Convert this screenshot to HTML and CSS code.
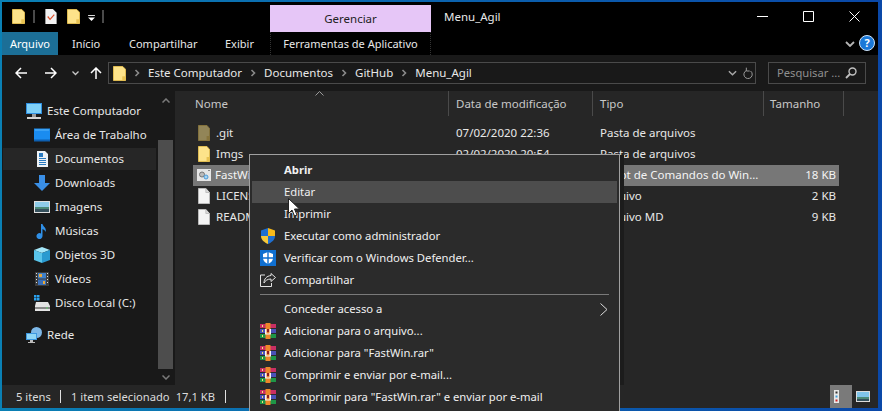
FILE: index.html
```html
<!DOCTYPE html>
<html lang="pt-BR">
<head>
  <meta charset="UTF-8">
  <title>Menu_Agil</title>
  <link rel="stylesheet" href="styles.css">
</head>
<body>
  <svg class="defs" width="0" height="0">
    <symbol id="folder" viewBox="0 0 14 16" preserveAspectRatio="none">
      <path d="M.5.5h10l3 3v12H.5z" fill="#fde38a" stroke="#e8c252"/>
      <path d="M10 11h3.5v4.5H10z" fill="#e8c252"/>
    </symbol>
    <symbol id="page" viewBox="0 0 13 16" preserveAspectRatio="none">
      <path d="M.5.5h8l4 4v11H.5z" fill="#f4f4f4" stroke="#bdbdbd"/>
      <path d="M8.5.5v4h4" fill="#dcdcdc" stroke="#bdbdbd"/>
    </symbol>
    <symbol id="rar" viewBox="0 0 16 16">
      <path d="M0 1h16v4H0z" fill="#c92f62"/>
      <path d="M0 6h16v4H0z" fill="#4a52b8"/>
      <path d="M0 11h16v4H0z" fill="#1e9646"/>
      <path d="M2 2h1v2H2zM2 7h1v2H2zM2 12h1v2H2z" fill="#f6e27a"/>
      <path d="M5.500 0h5v16h-5z" fill="#ee872a"/>
      <path d="M5 6h1.500v4.500h3V6H11v5.500H5z" fill="#f6f6f6"/>
      <path d="M7 6h2v3H7z" fill="#8f1d1d"/>
    </symbol>
    <symbol id="chev" viewBox="0 0 6 8">
      <path d="M1.500 1l3 3-3 3" fill="none" stroke="#8a8a8a" stroke-width="1.600"/>
    </symbol>
  </svg>

  <div class="window">
    <div class="titlebar">
      <div class="quick">
        <svg class="qa-folder"><use href="#folder"/></svg>
        <span class="qa-sep"></span>
        <svg class="qa-doc" viewBox="0 0 12 16">
          <path d="M0 0h8l4 4v12H0z" fill="#f2f2f2"/>
          <path d="M2.500 8l2.500 3 4.500-5" fill="none" stroke="#e0512a" stroke-width="1.300"/>
        </svg>
        <svg class="qa-folder qa-folder2"><use href="#folder"/></svg>
        <svg class="qa-menu" viewBox="0 0 8 7">
          <path d="M0 0h8v1H0z" fill="#fff"/>
          <path d="M0 3h8L4 7z" fill="#fff"/>
        </svg>
        <span class="qa-sep qa-sep2"></span>
      </div>
      <div class="context-tab">Gerenciar</div>
      <div class="win-title">Menu_Agil</div>
      <div class="win-controls">
        <svg viewBox="0 0 11 11"><path d="M0 5.500h11" stroke="#fff"/></svg>
        <svg viewBox="0 0 11 11"><path d="M.5.500h10v10H.5z" fill="none" stroke="#fff"/></svg>
        <svg viewBox="0 0 11 11"><path d="M.5.500l10 10M10.500.500l-10 10" stroke="#fff"/></svg>
      </div>
    </div>

    <div class="tabs">
      <a class="tab tab-file">Arquivo</a>
      <a class="tab tab-home">Início</a>
      <a class="tab tab-share">Compartilhar</a>
      <a class="tab tab-view">Exibir</a>
      <a class="tab tab-tools">Ferramentas de Aplicativo</a>
      <svg class="ribbon-toggle" viewBox="0 0 10 6"><path d="M1 1l4 4 4-4" fill="none" stroke="#b5b5b5" stroke-width="1.800"/></svg>
      <svg class="help" viewBox="0 0 16 16">
        <circle cx="8" cy="8" r="7.500" fill="#1a78d8" stroke="#cfe3f7"/>
        <text x="8" y="12" text-anchor="middle" class="help-mark">?</text>
      </svg>
    </div>

    <div class="addressbar">
      <svg class="nav-btn nav-back" viewBox="0 0 12 12"><path d="M6 1L1 6l5 5M1 6h11" fill="none" stroke="#fff" stroke-width="1.500"/></svg>
      <svg class="nav-btn nav-fwd" viewBox="0 0 12 12"><path d="M6 1l5 5-5 5M11 6H0" fill="none" stroke="#fff" stroke-width="1.500"/></svg>
      <svg class="nav-recent" viewBox="0 0 7 5"><path d="M.5.500l3 3 3-3" fill="none" stroke="#c8c8c8" stroke-width="1.300"/></svg>
      <svg class="nav-btn nav-up" viewBox="0 0 12 12"><path d="M1 6l5-5 5 5M6 1v11" fill="none" stroke="#fff" stroke-width="1.500"/></svg>
      <div class="path">
        <svg class="path-folder"><use href="#folder"/></svg>
        <svg class="crumb-chev"><use href="#chev"/></svg>
        <span class="crumb">Este Computador</span>
        <svg class="crumb-chev"><use href="#chev"/></svg>
        <span class="crumb">Documentos</span>
        <svg class="crumb-chev"><use href="#chev"/></svg>
        <span class="crumb">GitHub</span>
        <svg class="crumb-chev"><use href="#chev"/></svg>
        <span class="crumb">Menu_Agil</span>
        <svg class="path-drop" viewBox="0 0 10 6"><path d="M1 1l4 4 4-4" fill="none" stroke="#a8a8a8" stroke-width="1.600"/></svg>
        <svg class="path-refresh" viewBox="0 0 12 14"><path d="M9 4a5 5 0 1 1-5-.5M4 0v4h4" fill="none" stroke="#9a9a9a" stroke-width="1.200"/></svg>
      </div>
      <div class="search">
        <span>Pesquisar ...</span>
        <svg viewBox="0 0 12 12"><circle cx="7.500" cy="4.500" r="3.500" fill="none" stroke="#c0c0c0" stroke-width="1.400"/><path d="M5 7l-4 4" stroke="#c0c0c0" stroke-width="1.800"/></svg>
      </div>
    </div>

    <div class="content">
      <aside class="navpane">
        <ul class="tree">
          <li class="tree-top">
            <svg class="tree-icon" viewBox="0 0 16 16">
              <path d="M0 0h16v11H0z" fill="#2f8fe0"/><path d="M1 1h14v9H1z" fill="#7fd0f7"/>
              <path d="M6 11h4v3H6z" fill="#9a9a9a"/><path d="M1 14h14v2H1z" fill="#d4d4d4"/>
            </svg>Este Computador
          </li>
          <li>
            <svg class="tree-icon" viewBox="0 0 16 13"><path d="M0 0h16v12H0z" fill="#1a8cf0"/><path d="M0 11h16v2H0z" fill="#0d5fb0"/><path d="M1 1h14v1H1z" fill="#5ab7fa"/></svg>Área de Trabalho
          </li>
          <li class="is-current">
            <svg class="tree-icon" viewBox="0 0 16 16">
              <path d="M3 0h8l3 3v13H3z" fill="#eef2f6"/>
              <path d="M5 2h4v4H5zM5 7h7v1H5zM5 9h7v1H5zM5 11h7v1H5zM5 13h7v1H5z" fill="#2a7ac0"/>
            </svg>Documentos
          </li>
          <li>
            <svg class="tree-icon" viewBox="0 0 16 16"><path d="M5 0h6v8h5l-8 8-8-8h5z" fill="#3a8fe6"/></svg>Downloads
          </li>
          <li>
            <svg class="tree-icon" viewBox="0 0 16 12">
              <path d="M0 0h16v12H0z" fill="#e0e0e0"/><path d="M1 1h14v10H1z" fill="#8ecbe8"/>
              <path d="M1 6h14v2H1z" fill="#4c8a78"/><path d="M1 8h14v3H1z" fill="#35505c"/>
            </svg>Imagens
          </li>
          <li>
            <svg class="tree-icon" viewBox="0 0 16 16"><path d="M7 1h1.500c.5 3 4.500 3.500 3 8-.5-2-2-2.500-3-3v7a3 3 0 1 1-1.500-2.500z" fill="#2f8fe6"/></svg>Músicas
          </li>
          <li>
            <svg class="tree-icon" viewBox="0 0 16 16">
              <path d="M8 0l8 3-8 3-8-3z" fill="#a4e6f8"/><path d="M0 3l8 3v10l-8-3z" fill="#59c4ea"/><path d="M16 3l-8 3v10l8-3z" fill="#2a9ad0"/>
            </svg>Objetos 3D
          </li>
          <li>
            <svg class="tree-icon" viewBox="0 0 16 16">
              <path d="M1 1h14v14H1z" fill="#3b3b3b"/><path d="M4 2h8v5.500H4z" fill="#3f7fc8"/><path d="M4 8.500h8V14H4z" fill="#3a6fb8"/>
              <path d="M5 3h3v3H5zM9 10h2v3H9z" fill="#e8a83a"/><path d="M2 2h1v1H2zM2 5h1v1H2zM2 8h1v1H2zM2 11h1v1H2zM13 2h1v1h-1zM13 5h1v1h-1zM13 8h1v1h-1zM13 11h1v1h-1z" fill="#ddd"/>
            </svg>Vídeos
          </li>
          <li>
            <svg class="tree-icon" viewBox="0 0 16 16">
              <path d="M0 0h2.500v2.500H0zM3 0h2.500v2.500H3zM0 3h2.500v2.500H0zM3 3h2.500v2.500H3z" fill="#2aa2f0"/>
              <path d="M2 7h12l2 4v5H1v-5z" fill="#e4e4e4"/><path d="M1 12h15v2H1z" fill="#8a8a8a"/><path d="M12 12.500h2v1h-2z" fill="#5fd06a"/>
            </svg>Disco Local (C:)
          </li>
          <li class="tree-top tree-gap">
            <svg class="tree-icon" viewBox="0 0 16 16">
              <circle cx="10.500" cy="5.500" r="5.500" fill="#7db8e8"/><path d="M0 6h11v7H0z" fill="#3d97e0"/><path d="M1 7h9v5H1z" fill="#8fd6f7"/><path d="M4 13h3v2H4zM2 15h7v1H2z" fill="#bbb"/>
            </svg>Rede
          </li>
        </ul>
        <div class="scrollbar">
          <svg viewBox="0 0 8 5"><path d="M.5 4.500L4 1l3.500 3.500" fill="none" stroke="#7a7a7a" stroke-width="1.500"/></svg>
          <div class="thumb"></div>
          <svg viewBox="0 0 8 5"><path d="M.5.500L4 4 7.500.500" fill="none" stroke="#7a7a7a" stroke-width="1.500"/></svg>
        </div>
      </aside>

      <main class="files">
        <svg class="sort-mark" viewBox="0 0 9 5"><path d="M.5 4.500L4.500.500l4 4" fill="none" stroke="#9a9a9a"/></svg>
        <div class="cols cols-head">
          <div class="c-name">Nome</div>
          <div class="c-date">Data de modificação</div>
          <div class="c-type">Tipo</div>
          <div class="c-size">Tamanho</div>
        </div>
        <div class="rows">
          <div class="cols row">
            <div class="c-name"><svg class="file-icon dim"><use href="#folder"/></svg>.git</div>
            <div class="c-date">07/02/2020 22:36</div>
            <div class="c-type">Pasta de arquivos</div>
            <div class="c-size"></div>
          </div>
          <div class="cols row">
            <div class="c-name"><svg class="file-icon"><use href="#folder"/></svg>Imgs</div>
            <div class="c-date">02/02/2020 20:54</div>
            <div class="c-type">Pasta de arquivos</div>
            <div class="c-size"></div>
          </div>
          <div class="cols row is-selected">
            <div class="c-name">
              <svg class="file-icon file-wide" viewBox="0 0 14 12">
                <path d="M0 0h14v12H0z" fill="#e6e6e6"/><path d="M11 1h2v1h-2z" fill="#888"/>
                <circle cx="5" cy="5.500" r="2.500" fill="#bbb" stroke="#777"/><circle cx="9" cy="8" r="2" fill="#a8d4f0" stroke="#4a9ad8"/>
              </svg>FastWin.bat
            </div>
            <div class="c-date"></div>
            <div class="c-type">Script de Comandos do Win...</div>
            <div class="c-size">18 KB</div>
          </div>
          <div class="cols row">
            <div class="c-name"><svg class="file-icon"><use href="#page"/></svg>LICENSE</div>
            <div class="c-date"></div>
            <div class="c-type">Arquivo</div>
            <div class="c-size">2 KB</div>
          </div>
          <div class="cols row">
            <div class="c-name"><svg class="file-icon"><use href="#page"/></svg>README.md</div>
            <div class="c-date"></div>
            <div class="c-type">Arquivo MD</div>
            <div class="c-size">9 KB</div>
          </div>
        </div>
      </main>
    </div>

    <footer class="statusbar">
      <span class="status-count">5 itens</span>
      <span class="status-sep"></span>
      <span>1 item selecionado</span>
      <span class="status-size">17,1 KB</span>
      <span class="status-sep"></span>
      <div class="view-btns">
        <div class="view-btn is-on">
          <svg viewBox="0 0 5 13">
            <path d="M0 0h5v13H0z" fill="#e8e8e8"/>
            <path d="M1.500 1.500h2v2h-2z" fill="#333"/><path d="M1.500 5.500h2v2h-2z" fill="#3a9ad8"/><path d="M1.500 9.500h2v2h-2z" fill="#d02020"/>
          </svg>
        </div>
        <div class="view-btn">
          <svg class="view-thumb" viewBox="0 0 14 11">
            <path d="M0 0h14v11H0z" fill="#dcdcdc"/><path d="M1 1h12v9H1z" fill="#7fc4ea"/><path d="M1 6h12v2H1z" fill="#4c8a78"/><path d="M1 8h12v2H1z" fill="#33505c"/>
          </svg>
        </div>
      </div>
    </footer>
  </div>

  <div class="menu">
    <div class="menu-item is-default">Abrir</div>
    <div class="menu-item is-hover">Editar</div>
    <div class="menu-item">Imprimir</div>
    <div class="menu-item">
      <svg class="menu-icon" viewBox="0 0 14 16">
        <path d="M7 0l7 2.500V8H7z" fill="#f6b91a"/><path d="M7 0L0 2.500V8h7z" fill="#1f6fd0"/>
        <path d="M7 8h7c0 4-3.500 6.500-7 8z" fill="#1f6fd0"/><path d="M7 8H0c0 4 3.500 6.500 7 8z" fill="#f6c83a"/>
      </svg>Executar como administrador
    </div>
    <div class="menu-item">
      <svg class="menu-icon" viewBox="0 0 16 16">
        <path d="M0 0h16v16H0z" fill="#0f6fd0"/>
        <path d="M8 2l5 2v4c0 3-2.500 5-5 6-2.500-1-5-3-5-6V4z" fill="#fff"/><path d="M7.300 2v12h1.400V2zM3 7.300v1.400h10V7.300z" fill="#0f6fd0"/>
      </svg>Verificar com o Windows Defender...
    </div>
    <div class="menu-item">
      <svg class="menu-icon" viewBox="0 0 16 14">
        <path d="M11 .5l4.500 4-4.500 4V6C7 6 5 8 4 10c0-4 2.500-7 7-7.500zM5 2H.5v11.500h11V10" fill="none" stroke="#e4e4e4"/>
      </svg>Compartilhar
    </div>
    <div class="menu-sep"></div>
    <div class="menu-item">
      Conceder acesso a
      <svg class="menu-arrow" viewBox="0 0 8 13"><path d="M.5.500l6.500 6-6.500 6" fill="none" stroke="#dcdcdc"/></svg>
    </div>
    <div class="menu-item"><svg class="menu-icon"><use href="#rar"/></svg>Adicionar para o arquivo...</div>
    <div class="menu-item"><svg class="menu-icon"><use href="#rar"/></svg>Adicionar para "FastWin.rar"</div>
    <div class="menu-item"><svg class="menu-icon"><use href="#rar"/></svg>Comprimir e enviar por e-mail...</div>
    <div class="menu-item"><svg class="menu-icon"><use href="#rar"/></svg>Comprimir para "FastWin.rar" e enviar por e-mail</div>
  </div>

  <svg class="cursor" viewBox="0 0 12 19">
    <path d="M.5.500v15l3.500-3.500 2.500 6 2.500-1-2.500-6h5z" fill="#fff" stroke="#222"/>
  </svg>
</body>
</html>
```

FILE: styles.css
```css
* {
  box-sizing: border-box;
}
html, body {
  height: 411px;
  overflow: hidden;
}
body {
  margin: 0;
  padding: 2px 4px 3px 2px;
  position: relative;
  font-family: "Noto Sans", Arial, sans-serif;
  font-size: 11.5px;
  color: #e8e8e8;
  background: linear-gradient(90deg, #0a80b4, #0b63ae 50%, #0a48a8);
}
.defs {
  position: absolute;
}
svg {
  display: block;
  flex: none;
}
.window {
  height: 406px;
  display: flex;
  flex-direction: column;
  background: #262626;
}

/* title bar */
.titlebar {
  height: 30px;
  background: #000;
  display: flex;
  align-items: flex-end;
  flex: none;
}
.quick {
  width: 268px;
  height: 30px;
  padding: 7px 0 0 10px;
  display: flex;
  align-items: flex-start;
}
.qa-folder {
  width: 13px;
  height: 15px;
}
.qa-sep {
  width: 2px;
  height: 13px;
  margin: 1px 0 0 8px;
  background: #4a4a4a;
}
.qa-doc {
  width: 12px;
  height: 15px;
  margin-left: 10px;
}
.qa-folder2 {
  margin-left: 10px;
}
.qa-menu {
  width: 7px;
  height: 6px;
  margin: 6px 0 0 8px;
}
.qa-sep2 {
  margin-left: 7px;
}
.context-tab {
  width: 161px;
  height: 27px;
  line-height: 27px;
  text-align: center;
  background: #e6c6f7;
  color: #222;
}
.win-title {
  height: 30px;
  padding: 7px 0 0 13px;
  color: #e8e8e8;
}
.win-controls {
  margin-left: auto;
  height: 30px;
  padding: 9px 18px 0 0;
  display: flex;
  gap: 35px;
}
.win-controls svg {
  width: 11px;
  height: 11px;
}

/* ribbon tabs */
.tabs {
  height: 23px;
  flex: none;
  background: #000;
  display: flex;
  align-items: stretch;
  font-size: 11px;
}
.tab {
  line-height: 23px;
  color: #e8e8e8;
}
.tab-file {
  width: 56px;
  text-align: center;
  background: #1c6f97;
  color: #fff;
}
.tab-home {
  margin-left: 14px;
  width: 57px;
}
.tab-share {
  width: 96px;
}
.tab-view {
  width: 45px;
}
.tab-tools {
  width: 161px;
  text-align: center;
  border-left: 1px dotted #333;
  border-right: 1px dotted #333;
}
.ribbon-toggle {
  width: 10px;
  height: 6px;
  margin: 9px 0 0 auto;
}
.help {
  width: 16px;
  height: 16px;
  margin: 3px 3px 0 4px;
}
.help-mark {
  font-family: "Noto Sans", sans-serif;
  font-size: 11px;
  font-weight: 700;
  fill: #fff;
}

/* address row */
.addressbar {
  height: 36px;
  flex: none;
  background: #191919;
  display: flex;
  align-items: center;
  padding-left: 13px;
}
.nav-btn {
  width: 12px;
  height: 12px;
}
.nav-fwd {
  margin-left: 18px;
}
.nav-recent {
  width: 7px;
  height: 5px;
  margin-left: 15px;
}
.nav-up {
  margin-left: 11px;
}
.path {
  width: 648px;
  height: 22px;
  margin-left: 6px;
  padding-left: 4px;
  border: 1px solid #4a4a4a;
  display: flex;
  align-items: center;
}
.path-folder {
  width: 13px;
  height: 15px;
  margin-right: 8px;
}
.crumb-chev {
  width: 6px;
  height: 8px;
}
.crumb {
  padding: 0 8px 2px;
}
.path-drop {
  width: 9px;
  height: 6px;
  margin-left: auto;
}
.path-refresh {
  width: 10px;
  height: 13px;
  margin: 0 2px 0 6px;
}
.search {
  width: 98px;
  height: 22px;
  margin-left: 12px;
  padding: 0 8px 2px;
  border: 1px solid #4a4a4a;
  display: flex;
  align-items: center;
  justify-content: space-between;
  color: #8f8f8f;
  font-size: 11.2px;
}
.search svg {
  width: 12px;
  height: 12px;
  margin-top: 2px;
}

/* body of the window */
.content {
  flex: 1;
  display: flex;
  min-height: 0;
}
.navpane {
  width: 173px;
  flex: none;
  background: #191919;
  display: flex;
}
.tree {
  flex: 1;
  margin: 0;
  padding: 8px 0 0 1px;
  list-style: none;
}
.tree li {
  height: 24px;
  padding: 0 0 2px 31px;
  display: flex;
  align-items: center;
}
.tree .tree-top {
  padding-left: 23px;
}
.tree .tree-gap {
  margin-top: 8px;
}
.tree .is-current {
  height: 22px;
  margin: 1px 0;
  background: #262626;
}
.tree-icon {
  width: 16px;
  height: 16px;
  margin: 2px 5px 0 0;
}
.scrollbar {
  width: 19px;
  padding: 7px 2px 0;
  display: flex;
  flex-direction: column;
  align-items: center;
}
.scrollbar svg {
  width: 8px;
  height: 5px;
}
.thumb {
  width: 15px;
  height: 229px;
  margin: 37px 0 6px;
  background: #4d4d4d;
}
.files {
  flex: 1;
  position: relative;
}
.sort-mark {
  position: absolute;
  left: 140px;
  top: 0;
  width: 9px;
  height: 5px;
}
.cols {
  display: grid;
  grid-template-columns: 256px 144px 171px 80px;
  margin-left: 18px;
}
.cols > div {
  white-space: nowrap;
  overflow: hidden;
}
.cols-head {
  height: 25px;
  line-height: 25px;
  color: #c8c8c8;
}
.cols-head .c-name {
  padding-left: 2px;
  border-right: 1px solid #4a4a4a;
}
.cols-head .c-date, .cols-head .c-type {
  border-right: 1px solid #4a4a4a;
  padding-left: 7px;
}
.cols-head .c-size {
  border-right: 1px solid #4a4a4a;
  padding-left: 6px;
}
.rows {
  padding-top: 7px;
}
.row {
  height: 21px;
  line-height: 19px;
  grid-template-columns: 256px 144px 171px 75px;
}
.row .c-name {
  padding: 0 0 2px 5px;
  display: flex;
  align-items: center;
}
.row .c-date, .row .c-type {
  padding-left: 7px;
}
.row .c-size {
  text-align: right;
  padding-right: 3px;
}
.is-selected {
  width: 646px;
  background: #777;
  color: #f4f4f4;
}
.file-icon {
  width: 12px;
  height: 16px;
  margin-right: 6px;
}
.file-wide {
  width: 14px;
  height: 12px;
  margin: 0 4px 0 -1px;
}
.dim {
  opacity: 0.5;
}

/* status bar */
.statusbar {
  height: 23px;
  flex: none;
  display: flex;
  align-items: center;
  padding-left: 14px;
  background: #262626;
  color: #dcdcdc;
  font-size: 11.2px;
  white-space: nowrap;
}
.status-sep {
  width: 1px;
  height: 13px;
  margin: 0 10px;
  background: #e0e0e0;
}
.status-count {
  width: 34px;
}
.status-size {
  margin-left: 6px;
}
.view-btns {
  margin-left: auto;
  display: flex;
  height: 23px;
  margin-right: 4px;
}
.view-btn {
  width: 22px;
  height: 23px;
  display: flex;
  align-items: center;
  padding-left: 4px;
}
.view-btn.is-on {
  background: #7a7a7a;
}
.view-btn.is-on svg {
  width: 5px;
  height: 13px;
}
.view-thumb {
  width: 14px;
  height: 11px;
}

/* context menu, sits over the window */
.menu {
  position: absolute;
  left: 249px;
  top: 154px;
  width: 371px;
  height: 270px;
  padding: 4px 2px;
  background: #2b2b2b;
  border: 1px solid #a0a0a0;
  font-size: 11.25px;
}
.menu::after {
  content: "";
  position: absolute;
  left: 100%;
  top: 0;
  width: 4px;
  height: 230px;
  margin-left: 1px;
  background: #1c1c1c;
}
.menu-item {
  position: relative;
  height: 22px;
  padding-left: 32px;
  line-height: 22px;
  color: #f0f0f0;
}
.is-default {
  font-weight: 700;
}
.is-hover {
  background: #4d4d4d;
}
.menu-sep {
  height: 7px;
  margin: 0 8px;
  padding-top: 3px;
}
.menu-sep::before {
  content: "";
  display: block;
  height: 1px;
  background: #7a7a7a;
}
.menu-icon {
  position: absolute;
  left: 8px;
  top: 3px;
  width: 16px;
  height: 16px;
}
.menu-arrow {
  position: absolute;
  right: 9px;
  top: 5px;
  width: 8px;
  height: 13px;
}
.cursor {
  position: absolute;
  left: 288px;
  top: 198px;
  width: 12px;
  height: 19px;
}
```
